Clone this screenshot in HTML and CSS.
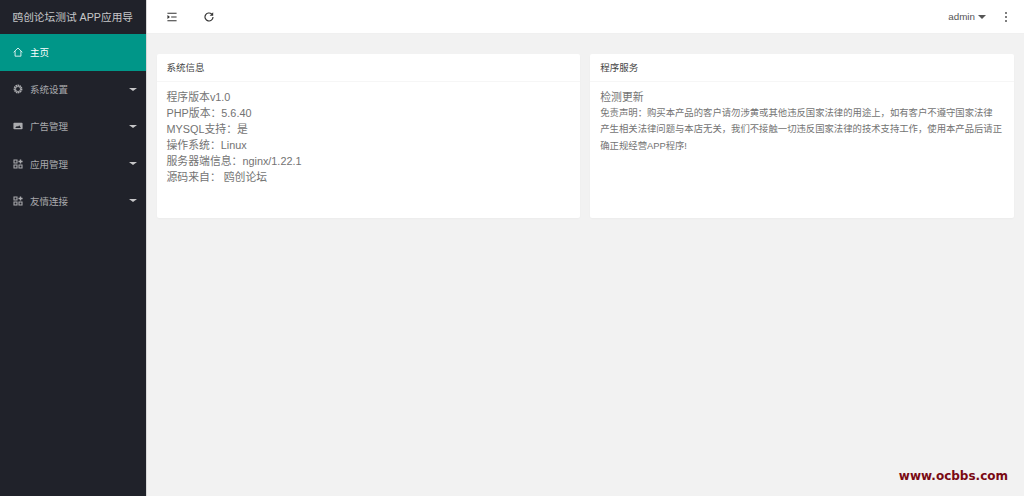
FILE: index.html
```html
<!DOCTYPE html>
<html lang="zh-CN">
<head>
<meta charset="utf-8">
<title>鸥创论坛测试 APP应用导</title>
<link rel="stylesheet" href="styles.css">
</head>
<body>
<div class="app">
  <aside class="side">
    <div class="logo">鸥创论坛测试 APP应用导</div>
    <nav class="nav">
      <a class="item active">
        <svg class="ico" viewBox="0 0 12 12"><path d="M.8 6.300 6 1.200l5.200 5.100M2.500 5v6h7V5" fill="none" stroke="currentColor" stroke-width="1"/></svg>
        <span class="lbl">主页</span>
      </a>
      <a class="item">
        <svg class="ico" viewBox="0 0 12 12"><circle cx="6" cy="6" r="4.300" fill="none" stroke="currentColor" stroke-width="2" stroke-dasharray="1.800 .6"/><circle cx="6" cy="6" r="3" fill="none" stroke="currentColor" stroke-width="1"/></svg>
        <span class="lbl">系统设置</span><i class="caret"></i>
      </a>
      <a class="item">
        <svg class="ico" viewBox="0 0 12 12"><path fill="currentColor" fill-rule="evenodd" d="M1.500 2h9a1 1 0 0 1 1 1v6a1 1 0 0 1-1 1h-9a1 1 0 0 1-1-1V3a1 1 0 0 1 1-1zM2.500 8.300h7L7.500 5 6 7 4.800 6z"/></svg>
        <span class="lbl">广告管理</span><i class="caret"></i>
      </a>
      <a class="item">
        <svg class="ico" viewBox="0 0 12 12"><path fill="none" stroke="currentColor" stroke-width="1.300" d="M1.200 1.200h3.600v3.600H1.200zM1.200 7.200h3.600v3.600H1.200zM7.200 7.200h3.600v3.600H7.200z"/><path stroke="currentColor" stroke-width="1.700" d="M9 .5v5M6.500 3h5"/></svg>
        <span class="lbl">应用管理</span><i class="caret"></i>
      </a>
      <a class="item">
        <svg class="ico" viewBox="0 0 12 12"><path fill="none" stroke="currentColor" stroke-width="1.300" d="M1.200 1.200h3.600v3.600H1.200zM1.200 7.200h3.600v3.600H1.200zM7.200 7.200h3.600v3.600H7.200z"/><path stroke="currentColor" stroke-width="1.700" d="M9 .5v5M6.500 3h5"/></svg>
        <span class="lbl">友情连接</span><i class="caret"></i>
      </a>
    </nav>
  </aside>
  <div class="main">
    <header class="top">
      <svg class="tool" viewBox="0 0 12 12"><path d="M.5 1.500h11M5 6h6.500M.5 10.500h11" stroke="currentColor" stroke-width="1.300" fill="none"/><path d="M.5 3.700v4.600L3.500 6z" fill="currentColor"/></svg>
      <svg class="tool" viewBox="0 0 12 12"><path d="M10.800 6A4.800 4.800 0 1 1 9.200 2.400" stroke="currentColor" stroke-width="1.400" fill="none"/><path d="M11 .3v4.200H6.800z" fill="currentColor"/></svg>
      <div class="user"><span>admin</span><i class="ucaret"></i></div>
      <div class="more"><i></i><i></i><i></i></div>
    </header>
    <section class="content">
      <article class="card">
        <h2 class="card-h">系统信息</h2>
        <div class="card-b">
          <p>程序版本v1.0</p>
          <p>PHP版本：5.6.40</p>
          <p>MYSQL支持：是</p>
          <p>操作系统：Linux</p>
          <p>服务器端信息：nginx/1.22.1</p>
          <p>源码来自： 鸥创论坛</p>
        </div>
      </article>
      <article class="card">
        <h2 class="card-h">程序服务</h2>
        <div class="card-b">
          <p>检测更新</p>
          <p class="note">免责声明：购买本产品的客户请勿涉黄或其他违反国家法律的用途上，如有客户不遵守国家法律<br>产生相关法律问题与本店无关，我们不接触一切违反国家法律的技术支持工作，使用本产品后请正确正规经营APP程序!</p>
        </div>
      </article>
    </section>
  </div>
</div>
<div class="mark">www.ocbbs.com</div>
</body>
</html>
```
FILE: styles.css
```css
* { box-sizing: border-box; }
html, body { height: 100%; }
body {
  margin: 0;
  overflow: hidden;
  background: #f2f2f2;
  color: #666;
  font-family: "Liberation Sans", "Noto Sans CJK SC", sans-serif;
}
.app { display: flex; height: 496px; }
.side {
  width: 146.5px;
  flex: none;
  background: #20222a;
  border-right: 1px solid #d8d8d8;
}
.logo {
  height: 33.5px;
  display: flex;
  align-items: center;
  justify-content: center;
  font-size: 10.7px;
  color: rgba(255, 255, 255, .75);
  white-space: nowrap;
}
.item {
  height: 37.2px;
  display: flex;
  align-items: center;
  padding: 0 9px 0 13px;
  color: rgba(255, 255, 255, .62);
  font-size: 9.5px;
}
.item.active { background: #009688; color: #fff; }
.ico { width: 10px; height: 10px; flex: none; margin-right: 7px; }
.lbl { flex: 1; }
.caret {
  width: 0;
  height: 0;
  border: 4px solid transparent;
  border-top: 3.5px solid rgba(255, 255, 255, .75);
  border-bottom: 0;
}
.main { flex: 1; min-width: 0; display: flex; flex-direction: column; }
.top {
  height: 34px;
  flex: none;
  background: #fff;
  border-bottom: 1px solid #f0f0f0;
  display: flex;
  align-items: center;
  padding: 0 17px 0 20px;
  color: #333;
}
.tool { width: 10px; height: 10px; margin-right: 27px; }
.user {
  margin-left: auto;
  display: flex;
  align-items: center;
  gap: 3px;
  font-size: 9.8px;
  color: #555;
}
.ucaret {
  width: 0;
  height: 0;
  border: 4px solid transparent;
  border-top: 4px solid #555;
  border-bottom: 0;
}
.more { display: flex; flex-direction: column; gap: 2px; margin-left: 19px; }
.more i { width: 2px; height: 2px; border-radius: 50%; background: #555; }
.content {
  display: grid;
  grid-template-columns: 1fr 1fr;
  gap: 10px;
  align-items: start;
  padding: 20px 10px;
}
.card { height: 164px; background: #fff; border-radius: 2px; box-shadow: 0 1px 2px rgba(0, 0, 0, .03); }
.card-h {
  height: 28px;
  margin: 0;
  padding: 0 10px;
  line-height: 28px;
  font-size: 9.5px;
  font-weight: 400;
  color: #444;
  border-bottom: 1px solid #f6f6f6;
}
.card-b { padding: 7px 10px; font-size: 10.85px; line-height: 16px; color: #737373; }
.card-b p { margin: 0; }
.card-b .note { font-size: 9.36px; line-height: 16.3px; }
.mark {
  position: absolute;
  right: 16px;
  bottom: 13px;
  font-family: "DejaVu Sans", sans-serif;
  font-size: 12px;
  line-height: 14px;
  font-weight: 700;
  color: #7a0a14;
}
```
